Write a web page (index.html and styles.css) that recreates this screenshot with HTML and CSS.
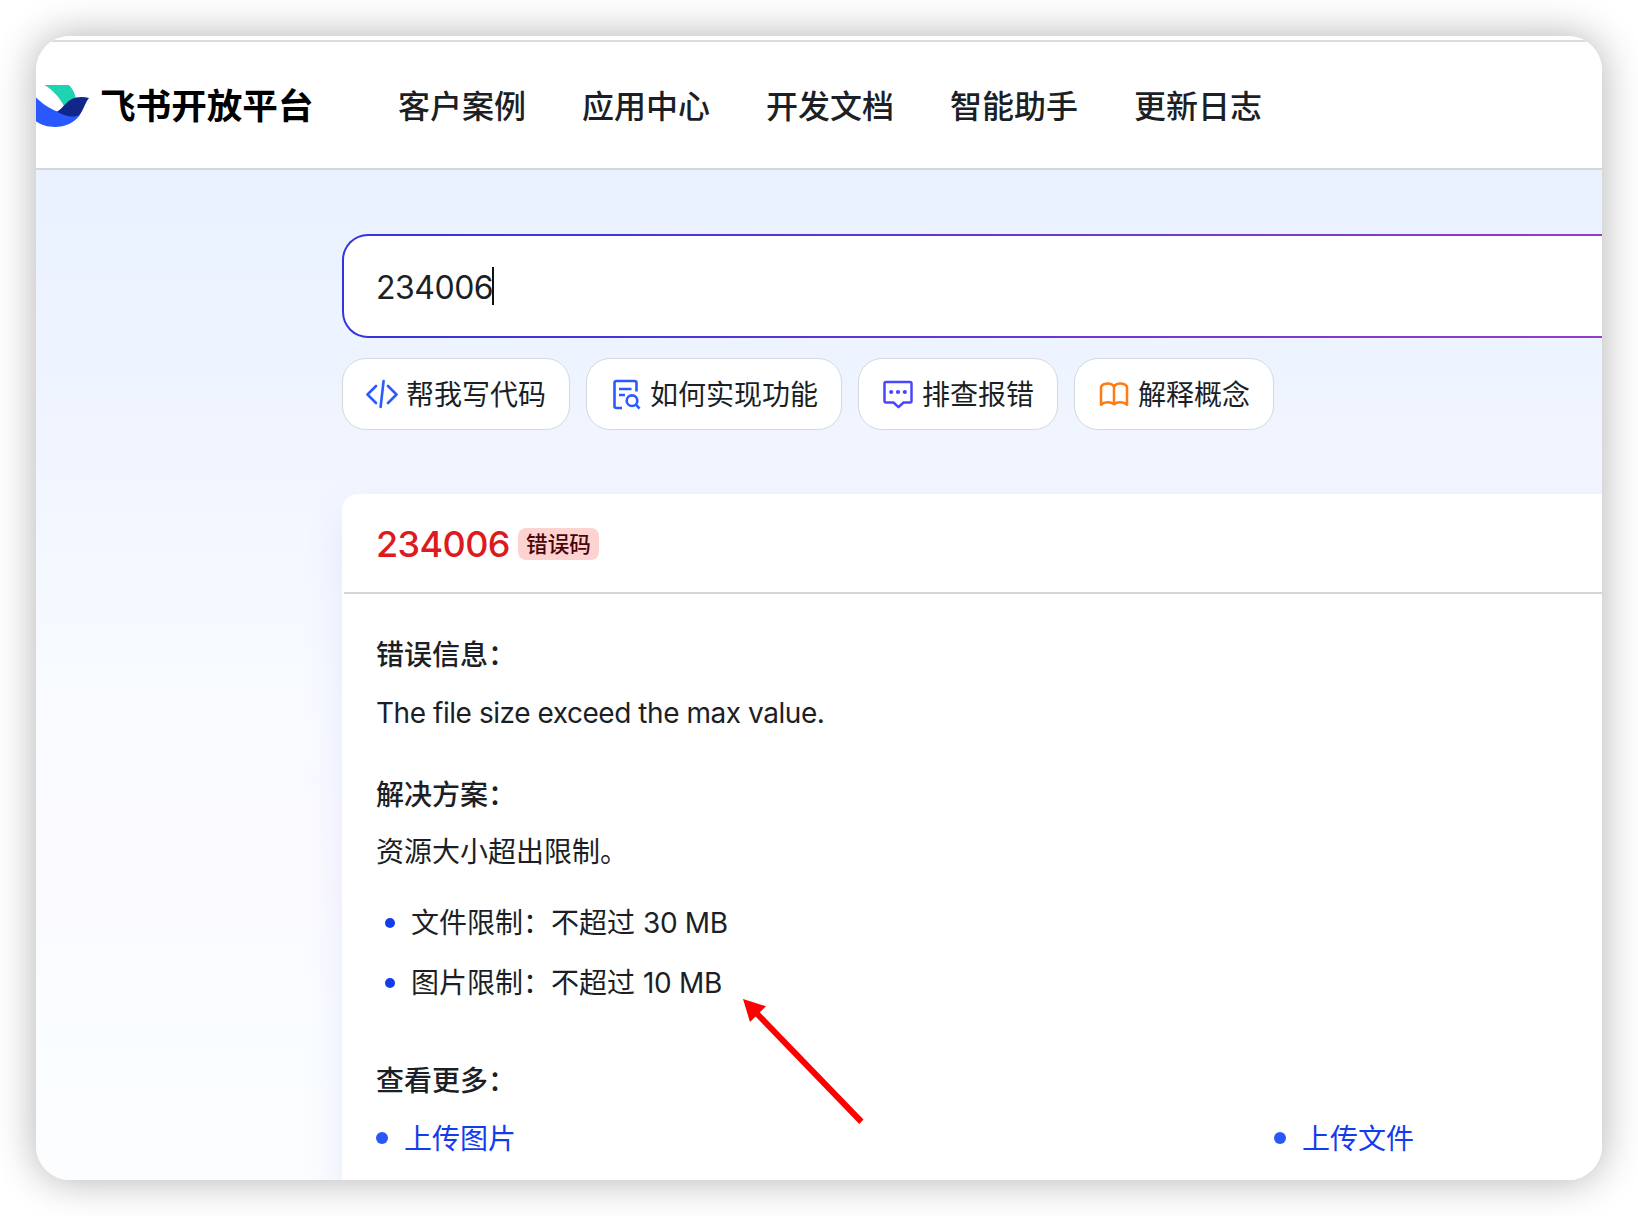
FILE: index.html
```html
<!DOCTYPE html>
<html lang="zh-CN">
<head>
<meta charset="utf-8">
<title>飞书开放平台</title>
<link rel="stylesheet" href="styles.css">
</head>
<body>
<div class="window">
  <header class="header">
    <svg class="logo" width="54" height="44" viewBox="0 0 54 44">
      <path fill="#1dd3b0" d="M8.500 1H33C36 4 38.500 8.500 39.700 13.500C36 15 32 18.500 28.500 23C24.500 14.500 17 6 8.500 1Z"/>
      <path fill="#2958ff" d="M0 13.500C6 19.500 14 25 21.500 27.500L44 31C38 39 29 43 19 43C12 43 5 41 0 37.300Z"/>
      <path fill="#10268a" d="M21 27.700C27 24.500 31 15.500 40 13.500C44.500 12.500 49 12.800 53 14C49.500 18 47.500 25.500 44 30.500C38 34.500 29 32 21 27.700Z"/>
    </svg>
    <div class="brand">飞书开放平台</div>
    <nav class="nav">
      <a>客户案例</a><a>应用中心</a><a>开发文档</a><a>智能助手</a><a>更新日志</a>
    </nav>
  </header>
  <main class="main">
    <div class="search"><div class="search-inner"><span>234006</span><i class="caret"></i></div></div>
    <div class="chips">
      <div class="chip">
        <svg class="icon" width="32" height="32" viewBox="0 0 32 32" fill="none" stroke="#2b5aff" stroke-width="2.600" stroke-linecap="round" stroke-linejoin="round"><path d="M10 8L1.500 16.500L10 25M22 8L30.500 16.500L22 25M17.600 3L14.600 29"/></svg>
        <span>帮我写代码</span>
      </div>
      <div class="chip">
        <svg class="icon" width="32" height="32" viewBox="0 0 32 32" fill="none" stroke="#2b5aff" stroke-width="2.600" stroke-linecap="butt" stroke-linejoin="round"><path d="M26.500 13.500V5Q26.500 3 24.500 3H6.500Q4.500 3 4.500 5V28Q4.500 30 6.500 30H12M9 11H21.500M9 17H15"/><circle cx="22" cy="22.700" r="5.300"/><path d="M26 26.700L29.500 30.700"/></svg>
        <span>如何实现功能</span>
      </div>
      <div class="chip">
        <svg class="icon" width="32" height="32" viewBox="0 0 32 32" fill="none" stroke="#4a45ff" stroke-width="2.500" stroke-linejoin="round"><path d="M4 4H28Q29.500 4 29.500 5.500V23Q29.500 24.500 28 24.500H21.500L16.500 29.200L11.500 24.500H4Q2.500 24.500 2.500 23V5.500Q2.500 4 4 4Z"/><g fill="#4a45ff" stroke="none"><circle cx="9.200" cy="14" r="2.100"/><circle cx="16" cy="14" r="2.100"/><circle cx="22.800" cy="14" r="2.100"/></g></svg>
        <span>排查报错</span>
      </div>
      <div class="chip">
        <svg class="icon" width="32" height="32" viewBox="0 0 32 32" fill="none" stroke="#ff7a0f" stroke-width="2.500" stroke-linejoin="round"><path d="M16 8.500C13.500 4.800 6.500 4.500 3 8.500V26.700C6.500 23.700 12.500 23.500 16 26.200C19.500 23.500 25.500 23.700 29 26.700V8.500C25.500 4.500 18.500 4.800 16 8.500ZM16 8.500V26.200"/></svg>
        <span>解释概念</span>
      </div>
    </div>
    <section class="card">
      <div class="card-head"><span class="code">234006</span><span class="badge">错误码</span></div>
      <div class="card-body">
        <h3 class="label">错误信息：</h3>
        <p class="text latin">The file size exceed the max value.</p>
        <h3 class="label">解决方案：</h3>
        <p class="text solution">资源大小超出限制。</p>
        <ul class="limits">
          <li>文件限制：不超过 <b class="num">30 MB</b></li>
          <li>图片限制：不超过 <b class="num">10 MB</b></li>
        </ul>
        <h3 class="label">查看更多：</h3>
        <div class="links"><a>上传图片</a><a>上传文件</a></div>
      </div>
    </section>
  </main>
  <svg class="arrow" width="122" height="127" viewBox="0 0 122 127"><path fill="#ff0000" d="M0 0L23 7.300L16.800 13.300L120.500 120.500L116.300 125L12.600 17.500L7 23Z"/></svg>
</div>
</body>
</html>
```
FILE: styles.css
```css
* { box-sizing: border-box; margin: 0; padding: 0; }
body {
  width: 1638px;
  height: 1216px;
  padding: 36px;
  overflow: hidden;
  background: #fff;
  color: #1c1f26;
  font-family: Inter, "Noto Sans CJK SC", sans-serif;
}
.window {
  position: relative;
  width: 1566px;
  height: 1144px;
  overflow: hidden;
  border-radius: 34px;
  background: #fff;
  box-shadow: 0 0 42px rgba(0, 0, 0, .31);
}
.header {
  display: flex;
  align-items: center;
  height: 134px;
  border-bottom: 2px solid #d6d6d8;
  background: linear-gradient(#fff 4px, #dcdcdc 4px, #dcdcdc 6px, #fff 6px);
}
.logo { flex: none; margin-top: 8px; }
.brand {
  width: 211px;
  margin: 10px 0 0 10px;
  color: #000;
  font-size: 35.600px;
  line-height: 48px;
  font-weight: 700;
  white-space: nowrap;
}
.nav {
  display: flex;
  gap: 56px;
  margin: 10px 0 0 87px;
  font-size: 32px;
  line-height: 48px;
  font-weight: 500;
}
.main {
  height: 1010px;
  padding: 64px 0 0 306px;
  overflow: hidden;
  background: linear-gradient(#eaf1ff, #eef4ff 200px, #f1f5ff 290px, #f5f9ff 420px, #f9fbff 560px, #fbfaff 720px, #fafdff 850px, #fcfdff);
}
.search {
  width: 1700px;
  height: 104px;
  padding: 2px;
  border-radius: 26px;
  background: linear-gradient(90deg, #3433dc, #983cc8 1300px);
}
.search-inner {
  display: flex;
  align-items: center;
  height: 100px;
  padding-left: 32px;
  border-radius: 24px;
  background: #fff;
  font-size: 32px;
  letter-spacing: -.5px;
}
.search-inner span { margin-top: 2px; }
.caret { width: 2px; height: 38px; margin-left: -1px; background: #111; }
.chips { display: flex; gap: 16px; margin-top: 20px; }
.chip {
  display: flex;
  align-items: center;
  gap: 8px;
  height: 72px;
  padding: 0 23px;
  border: 1px solid #d5d8de;
  border-radius: 24px;
  background: #fff;
  font-size: 28px;
  line-height: 40px;
}
.chip span { margin-top: 2px; }
.icon { flex: none; }
.card {
  width: 1700px;
  height: 760px;
  margin-top: 64px;
  border-radius: 16px;
  background: #fff;
  box-shadow: 0 20px 40px rgba(90, 110, 230, .12);
}
.card-head {
  display: flex;
  align-items: center;
  gap: 8px;
  height: 100px;
  margin-left: 2px;
  padding-left: 32px;
  border-bottom: 2px solid #d5d5d7;
}
.code { flex: none; width: 134px; margin-top: 1px; color: #dc1a20; font-size: 36px; font-weight: 500; letter-spacing: -.6px; }
.badge {
  width: 81px;
  height: 32px;
  margin-top: 2px;
  border-radius: 8px;
  background: #fdd3d2;
  color: #4a0408;
  font-size: 21.600px;
  line-height: 32px;
  font-weight: 500;
  text-align: center;
}
.card-body { padding: 39px 0 0 34px; font-size: 28px; line-height: 44px; }
.label { font-size: 28px; font-weight: 500; }
.text { margin: 14px 0 38px; }
.solution { margin-top: 13px; }
.latin { letter-spacing: -.45px; }
.limits { list-style: none; margin: -19px 0 46px; line-height: 60px; }
.limits li { display: flex; align-items: center; white-space: pre; }
.limits li::before { content: ""; width: 10px; height: 10px; margin: 0 16px 0 9px; border-radius: 50%; background: #133cec; }
.num { font-weight: 400; letter-spacing: -.3px; }
.links { display: grid; grid-template-columns: 898px 400px; margin-top: 14px; color: #133cec; }
.links a { display: flex; align-items: center; gap: 16px; }
.links a::before { content: ""; width: 12px; height: 12px; margin-top: -2px; border-radius: 50%; background: #2858f5; }
.arrow { position: absolute; left: 707px; top: 963px; }
```
